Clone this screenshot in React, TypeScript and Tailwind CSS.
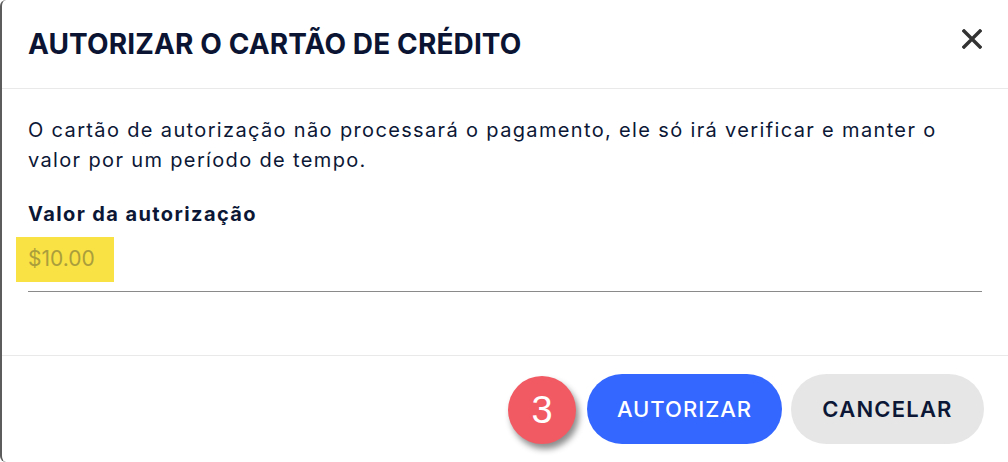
import React from "react";

const font = { fontFamily: "Inter, 'Noto Sans', sans-serif" };

function CloseIcon() {
  return (
    <svg width="20" height="20" viewBox="0 0 20 20" aria-hidden="true">
      <path d="M2 2 L18 18 M18 2 L2 18" stroke="#333333" strokeWidth="3.4" strokeLinecap="square" />
    </svg>
  );
}

export default function App() {
  return (
    <div className="h-[462px] w-[1008px] overflow-hidden bg-white" style={font}>
      <div className="flex h-full flex-col rounded-l-[6px] border-l-2 border-[#5c5c5c] bg-white text-[#0c1736]">
        <header className="flex h-[89px] shrink-0 items-center justify-between border-b border-[#e9e9e9] pl-[26px] pr-[26px]">
          <h2 className="text-[28px] font-bold tracking-[0.12px] text-[#0b1533]">
            AUTORIZAR O CARTÃO DE CRÉDITO
          </h2>
          <button type="button" className="-mt-[10px]">
            <CloseIcon />
          </button>
        </header>

        <div className="h-[267px] shrink-0 border-b border-[#e9e9e9] pl-[26px] pr-[26px] pt-[26px]">
          <p className="max-w-[945px] text-[20px] leading-[30px] tracking-[1.35px]">
            O cartão de autorização não processará o pagamento, ele só irá verificar e manter o valor por um período de tempo.
          </p>
          <label className="mt-[24px] block text-[20px] font-bold leading-[30px] tracking-[1.4px]">
            Valor da autorização
          </label>
          <div className="relative mt-[8px] flex h-[55px] items-start border-b border-[#8a8a8a]">
            <span className="absolute -left-[12px] top-0 h-[45px] w-[98px] bg-[#f9e244]" />
            <span className="relative pt-[8px] text-[21px] leading-[28px] text-[#aa9e3c]">$10.00</span>
          </div>
        </div>

        <footer className="relative flex flex-1 items-start justify-end gap-[9px] pr-[24px] pt-[18px]">
          <div className="relative mr-[2px] mt-[2px] flex h-[68px] w-[68px] items-center justify-center rounded-full bg-[#f25a63] shadow-[3px_5px_6px_rgba(0,0,0,0.45)]">
            <span className="text-[38px] font-medium text-white" style={{ fontFamily: "'Liberation Sans', Arial, sans-serif" }}>3</span>
          </div>
          <button
            type="button"
            className="h-[70px] w-[195px] rounded-full bg-[#3467ff] text-[22px] font-medium tracking-[1px] text-white"
          >
            AUTORIZAR
          </button>
          <button
            type="button"
            className="h-[70px] w-[193px] rounded-full bg-[#e6e6e6] text-[22px] font-semibold tracking-[1.2px] text-[#0c1736]"
          >
            CANCELAR
          </button>
        </footer>
      </div>
    </div>
  );
}
